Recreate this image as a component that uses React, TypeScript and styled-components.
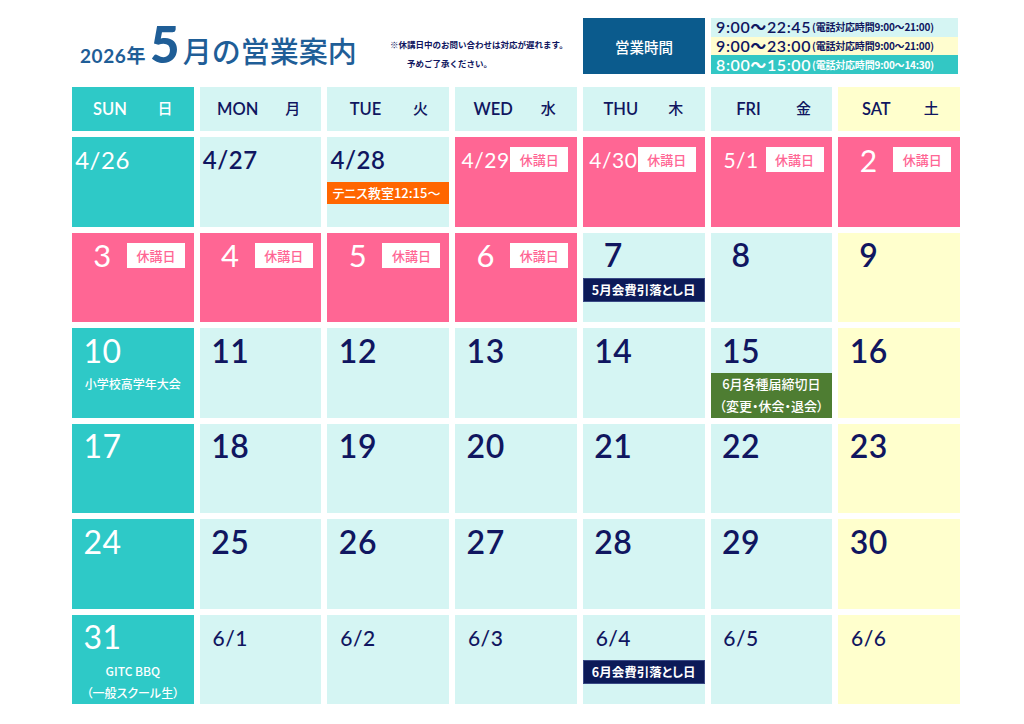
import React from 'react';
import styled, { createGlobalStyle } from 'styled-components';

const GlobalStyle = createGlobalStyle`
  html, body { margin: 0; padding: 0; background: #ffffff; }
  body { font-family: Lato, "Noto Sans CJK JP", sans-serif; }
`;

const C = {
  teal: '#2ec9c7',
  cyan: '#d5f5f3',
  yellow: '#ffffcd',
  pink: '#ff6694',
  navy: '#101660',
  orange: '#ff6600',
  green: '#4e7d32',
  blue: '#1f5e97',
  boxBlue: '#0b5b8d',
  badgeNavy: '#0c1a58',
};

type Kind = 'sun' | 'day' | 'sat' | 'off';

const bgOf = (k: Kind) =>
  k === 'sun' ? C.teal : k === 'off' ? C.pink : k === 'sat' ? C.yellow : C.cyan;
const fgOf = (k: Kind) => (k === 'sun' || k === 'off' ? '#ffffff' : C.navy);

const Page = styled.div`
  width: 1024px;
  height: 724px;
  box-sizing: border-box;
  padding: 18px 64px 0 72px;
  display: flex;
  flex-direction: column;
`;

const Header = styled.header`
  display: flex;
  height: 56px;
`;

const Title = styled.h1`
  margin: 0;
  width: 318px;
  box-sizing: border-box;
  padding: 0 0 0 8px;
  display: flex;
  align-items: baseline;
  color: ${C.blue};
  line-height: 1;
  font-family: Lato, "Noto Sans CJK JP", sans-serif;
`;

const Year = styled.span`
  font-size: 19px;
  font-weight: 700;
  letter-spacing: 0.6px;
`;

const BigMonth = styled.span`
  font-size: 51px;
  font-weight: 900;
  margin: 0 3px 0 4px;
`;

const TitleRest = styled.span`
  font-family: "Noto Sans CJK JP", sans-serif;
  font-size: 29px;
  font-weight: 500;
`;

const Notes = styled.div`
  width: 193px;
  padding-top: 17px;
  font-family: "Noto Sans CJK JP", sans-serif;
  font-size: 8.5px;
  font-weight: 700;
  line-height: 19px;
  color: ${C.navy};
`;

const NoteLine = styled.div<{ $indent?: number }>`
  padding-left: ${(p) => p.$indent ?? 0}px;
  white-space: nowrap;
`;

const HoursBox = styled.div`
  width: 122px;
  background: ${C.boxBlue};
  color: #ffffff;
  display: flex;
  align-items: center;
  justify-content: center;
  font-family: "Noto Sans CJK JP", sans-serif;
  font-size: 14.5px;
  font-weight: 500;
`;

const HoursPanel = styled.div`
  flex: 1;
  margin-left: 6px;
  margin-right: 2px;
  display: grid;
  grid-template-rows: repeat(3, 1fr);
  overflow: hidden;
`;

const HourRow = styled.div<{ $bg: string; $fg: string }>`
  display: flex;
  align-items: center;
  padding-left: 5px;
  height: 18.67px;
  line-height: 18px;
  overflow: hidden;
  background: ${(p) => p.$bg};
  color: ${(p) => p.$fg};
  white-space: nowrap;
`;

const HourTime = styled.span`
  font-size: 16px;
  font-weight: 600;
  letter-spacing: 0.6px;
`;

const HourPhone = styled.span`
  font-family: "Noto Sans CJK JP", sans-serif;
  font-size: 10px;
  font-weight: 700;
  letter-spacing: -0.2px;
  margin-left: 1px;
`;

const Grid = styled.div`
  margin-top: 13px;
  display: grid;
  grid-template-columns: repeat(7, 1fr);
  grid-template-rows: 44px repeat(6, 89.5px);
  gap: 6px;
`;

const DayHead = styled.div<{ $kind: Kind }>`
  background: ${(p) => bgOf(p.$kind)};
  color: ${(p) => fgOf(p.$kind)};
  display: grid;
  grid-template-columns: 76px 34px;
  align-items: center;
  justify-items: center;
  font-size: 16.5px;
  font-weight: 600;
`;

const HeadEn = styled.span`
  line-height: 20px;
`;

const HeadJa = styled.span`
  font-family: "Noto Sans CJK JP", sans-serif;
  font-size: 15px;
  font-weight: 500;
  line-height: 20px;
  margin-bottom: 2px;
`;

const Cell = styled.div<{ $kind: Kind }>`
  background: ${(p) => bgOf(p.$kind)};
  color: ${(p) => fgOf(p.$kind)};
  display: flex;
  flex-direction: column;
  overflow: hidden;
`;

const TopRow = styled.div`
  height: 45px;
  flex: none;
  display: flex;
  align-items: center;
`;

const DateNum = styled.span<{ $size: number; $weight: number }>`
  width: 61px;
  flex: none;
  text-align: center;
  font-size: ${(p) => p.$size}px;
  font-weight: ${(p) => p.$weight};
  letter-spacing: 0.5px;
  line-height: 1;
  white-space: nowrap;
`;

const OffBadge = styled.span`
  margin-left: -6px;
  width: 58px;
  height: 25px;
  background: #ffffff;
  color: ${C.pink};
  display: flex;
  align-items: center;
  justify-content: center;
  font-family: "Noto Sans CJK JP", sans-serif;
  font-size: 13px;
  font-weight: 500;
`;

type EvType = 'orange' | 'navy' | 'green';

const EventTag = styled.div<{ $type: EvType }>`
  box-sizing: border-box;
  background: ${(p) => (p.$type === 'orange' ? C.orange : p.$type === 'navy' ? C.badgeNavy : C.green)};
  border: ${(p) => (p.$type === 'navy' ? '1px solid #3a4a85' : 'none')};
  color: #ffffff;
  font-family: "Noto Sans CJK JP", sans-serif;
  font-feature-settings: "palt";
  font-size: ${(p) => (p.$type === 'navy' ? 12.5 : 13)}px;
  font-weight: ${(p) => (p.$type === 'navy' ? 700 : 500)};
  line-height: 22px;
  min-height: 22px;
  text-align: ${(p) => (p.$type === 'orange' ? 'left' : 'center')};
  padding-left: ${(p) => (p.$type === 'orange' ? 5 : 0)}px;
  flex: ${(p) => (p.$type === 'green' ? 1 : 'none')};
  white-space: nowrap;
`;

const SunNote = styled.div`
  font-family: "Noto Sans CJK JP", sans-serif;
  font-feature-settings: "palt";
  font-size: 12px;
  font-weight: 500;
  line-height: 22px;
  text-align: center;
  white-space: nowrap;
`;

type Day = {
  d: string;
  k: Kind;
  size: number;
  off?: boolean;
  ev?: { t: EvType; lines: string[] };
  note?: string[];
};

const day = (d: string, k: Kind, size: number, extra: Partial<Day> = {}): Day => ({ d, k, size, ...extra });

const weeks: Day[][] = [
  [
    day('4/26', 'sun', 24),
    day('4/27', 'day', 24),
    day('4/28', 'day', 24, { ev: { t: 'orange', lines: ['テニス教室12:15〜'] } }),
    day('4/29', 'off', 21, { off: true }),
    day('4/30', 'off', 21, { off: true }),
    day('5/1', 'off', 21, { off: true }),
    day('2', 'off', 30, { off: true }),
  ],
  [
    day('3', 'off', 31, { off: true }),
    day('4', 'off', 31, { off: true }),
    day('5', 'off', 31, { off: true }),
    day('6', 'off', 31, { off: true }),
    day('7', 'day', 32, { ev: { t: 'navy', lines: ['5月会費引落とし日'] } }),
    day('8', 'day', 32),
    day('9', 'sat', 32),
  ],
  [
    day('10', 'sun', 32, { note: ['小学校高学年大会'] }),
    day('11', 'day', 32),
    day('12', 'day', 32),
    day('13', 'day', 32),
    day('14', 'day', 32),
    day('15', 'day', 32, { ev: { t: 'green', lines: ['6月各種届締切日', '（変更・休会・退会）'] } }),
    day('16', 'sat', 32),
  ],
  [
    day('17', 'sun', 32),
    day('18', 'day', 32),
    day('19', 'day', 32),
    day('20', 'day', 32),
    day('21', 'day', 32),
    day('22', 'day', 32),
    day('23', 'sat', 32),
  ],
  [
    day('24', 'sun', 32),
    day('25', 'day', 32),
    day('26', 'day', 32),
    day('27', 'day', 32),
    day('28', 'day', 32),
    day('29', 'day', 32),
    day('30', 'sat', 32),
  ],
  [
    day('31', 'sun', 32, { note: ['GITC BBQ', '（一般スクール生）'] }),
    day('6/1', 'day', 21),
    day('6/2', 'day', 21),
    day('6/3', 'day', 21),
    day('6/4', 'day', 21, { ev: { t: 'navy', lines: ['6月会費引落とし日'] } }),
    day('6/5', 'day', 21),
    day('6/6', 'sat', 21),
  ],
];

const heads: { en: string; ja: string; k: Kind }[] = [
  { en: 'SUN', ja: '日', k: 'sun' },
  { en: 'MON', ja: '月', k: 'day' },
  { en: 'TUE', ja: '火', k: 'day' },
  { en: 'WED', ja: '水', k: 'day' },
  { en: 'THU', ja: '木', k: 'day' },
  { en: 'FRI', ja: '金', k: 'day' },
  { en: 'SAT', ja: '土', k: 'sat' },
];

const hours = [
  { t: '9:00〜22:45', p: '(電話対応時間9:00〜21:00)', bg: '#d5f5f3', fg: C.navy },
  { t: '9:00〜23:00', p: '(電話対応時間9:00〜21:00)', bg: '#fffdcf', fg: C.navy },
  { t: '8:00〜15:00', p: '(電話対応時間9:00〜14:30)', bg: '#33c7c4', fg: '#ffffff' },
];

const weightOf = (c: Day) =>
  c.k === 'sun' || c.k === 'off' ? 400 : c.d.startsWith('6/') ? 500 : 600;

export default function App() {
  return (
    <>
      <GlobalStyle />
      <Page>
        <Header>
          <Title>
            <Year>2026年</Year>
            <BigMonth>5</BigMonth>
            <TitleRest>月の営業案内</TitleRest>
          </Title>
          <Notes>
            <NoteLine>※休講日中のお問い合わせは対応が遅れます。</NoteLine>
            <NoteLine $indent={17}>予めご了承ください。</NoteLine>
          </Notes>
          <HoursBox>営業時間</HoursBox>
          <HoursPanel>
            {hours.map((h) => (
              <HourRow key={h.t} $bg={h.bg} $fg={h.fg}>
                <HourTime>{h.t}</HourTime>
                <HourPhone>{h.p}</HourPhone>
              </HourRow>
            ))}
          </HoursPanel>
        </Header>
        <Grid>
          {heads.map((h) => (
            <DayHead key={h.en} $kind={h.k}>
              <HeadEn>{h.en}</HeadEn>
              <HeadJa>{h.ja}</HeadJa>
            </DayHead>
          ))}
          {weeks.flat().map((c) => (
            <Cell key={c.d} $kind={c.k}>
              <TopRow>
                <DateNum $size={c.size} $weight={weightOf(c)}>
                  {c.d}
                </DateNum>
                {c.off && <OffBadge>休講日</OffBadge>}
              </TopRow>
              {c.ev && (
                <EventTag $type={c.ev.t}>
                  {c.ev.lines.map((l) => (
                    <div key={l}>{l}</div>
                  ))}
                </EventTag>
              )}
              {c.note && (
                <SunNote>
                  {c.note.map((l) => (
                    <div key={l}>{l}</div>
                  ))}
                </SunNote>
              )}
            </Cell>
          ))}
        </Grid>
      </Page>
    </>
  );
}
